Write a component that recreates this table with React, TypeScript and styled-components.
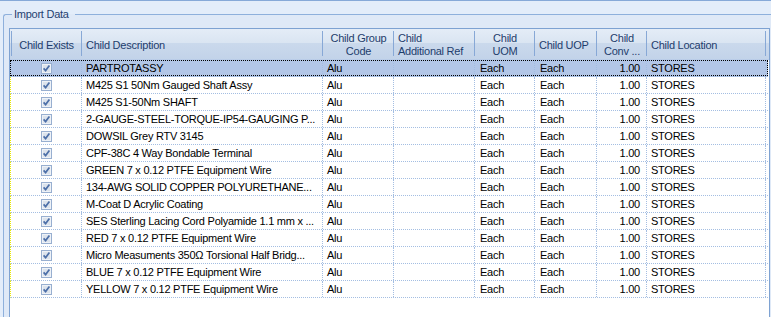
import React from 'react';
import styled, { createGlobalStyle } from 'styled-components';

const Global = createGlobalStyle`
  html, body { margin: 0; padding: 0; height: 317px; overflow: hidden; }
  body { background: #e2ecf9; font-family: "Liberation Sans", Arial, sans-serif; }
`;

const Page = styled.div`
  height: 317px;
  box-sizing: border-box;
  border-top: 1px solid #86a9d8;
  background: #e3edfa;
  overflow: hidden;
`;

const Group = styled.fieldset`
  margin: 7px 0 0 3px;
  padding: 0 0 0 5px;
  border: 1px solid #8eb0dc;
  border-right: none;
  border-bottom: none;
  border-top-left-radius: 3px;
  min-width: 0;
  height: 400px;
  background: #dfe9f7;
`;

const Legend = styled.legend`
  margin-left: 3px;
  padding: 0 6px 0 2px;
  font-size: 11px;
  line-height: 13px;
  letter-spacing: -0.25px;
  color: #1f3f70;
`;

const Grid = styled.div`
  margin-top: 7px;
  width: 761px;
  height: 320px;
  box-sizing: border-box;
  border: 1px solid #7ea2d2;
  background: #ffffff;
`;

const HeaderRow = styled.div`
  display: flex;
  position: relative;
  height: 30px;
  padding-left: 1px;
  border-bottom: 1px solid #b9cce8;
  background: linear-gradient(to bottom, #e4ecf7 0%, #dae5f2 45%, #cad9ec 47%, #c2d3e9 100%);
  &::before {
    content: '';
    position: absolute;
    left: 1px;
    top: 2px;
    bottom: 3px;
    width: 1px;
    background: #87a8d6;
  }
`;

const HeaderCell = styled.div<{ $w: number; $align: 'left' | 'center' }>`
  position: relative;
  width: ${(p) => p.$w}px;
  flex: none;
  box-sizing: border-box;
  display: flex;
  flex-direction: column;
  justify-content: center;
  align-items: ${(p) => (p.$align === 'center' ? 'center' : 'flex-start')};
  padding: 2px 4px 0 ${(p) => (p.$align === 'center' ? 4 : 4)}px;
  font-size: 11px;
  line-height: 13px;
  letter-spacing: -0.25px;
  color: #1e3d6c;
  white-space: nowrap;
  overflow: hidden;
  &::after {
    content: '';
    position: absolute;
    right: 0;
    top: 2px;
    bottom: 3px;
    width: 1px;
    background: #87a8d6;
  }
`;

const DataRow = styled.div<{ $selected?: boolean }>`
  position: relative;
  display: flex;
  width: 758px;
  height: 17px;
  box-sizing: border-box;
  border-left: 1px dotted ${(p) => (p.$selected ? 'transparent' : '#e8e800')};
  border-bottom: 1px dotted #a4bee2;
  background: ${(p) => (p.$selected ? '#b2c6e7' : 'transparent')};
  &::after {
    content: '';
    display: ${(p) => (p.$selected ? 'block' : 'none')};
    position: absolute;
    top: 0;
    bottom: 0;
    left: -1px;
    right: 0;
    border: 1px dotted #000;
    pointer-events: none;
  }
`;

const Cell = styled.div<{ $w: number; $align: 'left' | 'right' | 'center'; $pl?: number; $pr?: number }>`
  width: ${(p) => p.$w}px;
  flex: none;
  box-sizing: border-box;
  display: flex;
  align-items: center;
  justify-content: ${(p) =>
    p.$align === 'center' ? 'center' : p.$align === 'right' ? 'flex-end' : 'flex-start'};
  padding: 0 ${(p) => p.$pr ?? 2}px 0 ${(p) => p.$pl ?? 4}px;
  border-right: 1px dotted #a4bee2;
  font-size: 11px;
  line-height: 16px;
  letter-spacing: -0.25px;
  color: #000;
  white-space: nowrap;
  overflow: hidden;
`;

const Check = () => (
  <svg width="11" height="11" viewBox="0 0 11 11" style={{ display: 'block' }}>
    <rect x="0.5" y="0.5" width="10" height="10" fill="#e4e9f0" stroke="#98afd0" />
    <rect x="1.5" y="1.5" width="8" height="8" fill="#dce3ec" stroke="#eef2f7" />
    <path d="M2.6 5.4 L4.6 7.6 L8.4 2.6" fill="none" stroke="#4c6fa8" strokeWidth="1.7" />
  </svg>
);

type Col = {
  w: number;
  head: string[];
  headAlign: 'left' | 'center';
  align: 'left' | 'right' | 'center';
  pl?: number;
  pr?: number;
};

const cols: Col[] = [
  { w: 71, head: ['Child Exists'], headAlign: 'center', align: 'center', pl: 0, pr: 0 },
  { w: 241, head: ['Child Description'], headAlign: 'left', align: 'left', pl: 4 },
  { w: 71, head: ['Child Group', 'Code'], headAlign: 'center', align: 'left', pl: 4 },
  { w: 81, head: ['Child', 'Additional Ref'], headAlign: 'left', align: 'left', pl: 4 },
  { w: 60, head: ['Child', 'UOM'], headAlign: 'center', align: 'left', pl: 5 },
  { w: 62, head: ['Child UOP'], headAlign: 'left', align: 'left', pl: 5 },
  { w: 50, head: ['Child', 'Conv ...'], headAlign: 'center', align: 'right', pl: 2, pr: 6 },
  { w: 119, head: ['Child Location'], headAlign: 'left', align: 'left', pl: 4 },
];

const descriptions = [
  'PARTROTASSY',
  'M425 S1 50Nm Gauged Shaft Assy',
  'M425 S1-50Nm SHAFT',
  '2-GAUGE-STEEL-TORQUE-IP54-GAUGING P...',
  'DOWSIL Grey RTV 3145',
  'CPF-38C 4 Way Bondable Terminal',
  'GREEN 7 x 0.12 PTFE Equipment Wire',
  '134-AWG SOLID COPPER POLYURETHANE...',
  'M-Coat D Acrylic Coating',
  'SES Sterling Lacing Cord Polyamide 1.1 mm x ...',
  'RED 7 x 0.12 PTFE Equipment Wire',
  'Micro Measuments 350Ω Torsional Half Bridg...',
  'BLUE 7 x 0.12 PTFE Equipment Wire',
  'YELLOW 7 x 0.12 PTFE Equipment Wire',
];

export default function App() {
  return (
    <>
      <Global />
      <Page>
        <Group>
          <Legend>Import Data</Legend>
          <Grid>
            <HeaderRow>
              {cols.map((c, i) => (
                <HeaderCell key={i} $w={c.w} $align={c.headAlign}>
                  {c.head.map((l, j) => (
                    <span key={j}>{l}</span>
                  ))}
                </HeaderCell>
              ))}
            </HeaderRow>
            {descriptions.map((d, r) => {
              const values: React.ReactNode[] = [<Check />, d, 'Alu', '', 'Each', 'Each', '1.00', 'STORES'];
              return (
                <DataRow key={r} $selected={r === 0}>
                  {cols.map((c, i) => (
                    <Cell key={i} $w={c.w} $align={c.align} $pl={c.pl} $pr={c.pr}>
                      {values[i]}
                    </Cell>
                  ))}
                </DataRow>
              );
            })}
          </Grid>
        </Group>
      </Page>
    </>
  );
}
